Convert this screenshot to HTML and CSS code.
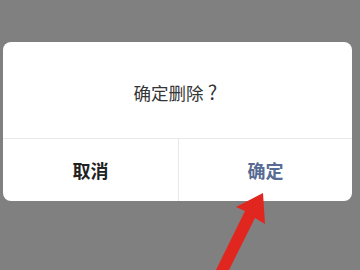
FILE: index.html
```html
<!DOCTYPE html>
<html lang="zh">
<head>
<meta charset="utf-8">
<link rel="stylesheet" href="styles.css">
</head>
<body>
<div class="screen">
  <div class="dialog">
    <div class="title">确定删除<span class="q">?</span></div>
    <div class="actions">
      <div class="btn cancel">取消</div>
      <div class="btn ok">确定</div>
    </div>
  </div>
  <svg class="arrow" width="360" height="270" viewBox="0 0 360 270">
    <polygon fill="#e1261f" points="263,193 265,224 255,218 228,272 215,272 245,211 236,207"/>
  </svg>
</div>
</body>
</html>
```
FILE: styles.css
```css
html, body {
  margin: 0;
  padding: 0;
  background: #808080;
}
.screen {
  position: relative;
  width: 360px;
  height: 270px;
  overflow: hidden;
  padding-top: 42px;
  box-sizing: border-box;
  font-family: "Noto Sans CJK SC", "Noto Sans", sans-serif;
}
.dialog {
  margin-left: 3px;
  width: 349px;
  height: 159px;
  background: #fff;
  border-radius: 8px;
  display: flex;
  flex-direction: column;
  overflow: hidden;
}
.title {
  height: 97px;
  display: flex;
  align-items: center;
  justify-content: center;
  font-size: 17.5px;
  color: #353535;
  border-bottom: 1px solid #e8e8e8;
  box-sizing: border-box;
  padding-top: 4px;
}
.q {
  display: inline-block;
  width: 18px;
  text-align: center;
  font-size: 20px;
  line-height: 1;
}
.actions {
  flex: 1;
  display: flex;
}
.btn {
  flex: 1;
  display: flex;
  align-items: center;
  justify-content: center;
  font-size: 18px;
  font-weight: bold;
}
.cancel {
  color: #222;
  border-right: 1px solid #e8e8e8;
  flex: 0 0 175px;
}
.ok {
  color: #576b95;
}
.arrow {
  position: absolute;
  left: 0;
  top: 0;
}
```
